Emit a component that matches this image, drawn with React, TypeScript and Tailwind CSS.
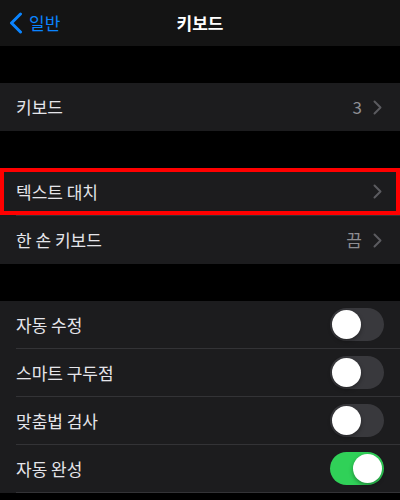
const font = { fontFamily: '"Noto Sans CJK KR", "Noto Sans", sans-serif' };

function Chevron() {
  return (
    <svg width="9" height="15" viewBox="0 0 9 15" fill="none" className="ml-[11px]">
      <path d="M1.5 1.5L7.5 7.5L1.5 13.5" stroke="#5b5b5f" strokeWidth="2" strokeLinecap="round" strokeLinejoin="round" />
    </svg>
  );
}

function Toggle({ on }: { on: boolean }) {
  return (
    <div
      className={`w-[54px] h-[33px] rounded-full p-[2px] flex ${on ? "bg-[#30d158] justify-end" : "bg-[#39393d] justify-start"}`}
    >
      <div className="w-[29px] h-[29px] rounded-full bg-white shadow-[0_2px_4px_rgba(0,0,0,0.35)]" />
    </div>
  );
}

function NavRow({ label, value, boxed }: { label: string; value?: string; boxed?: boolean }) {
  return (
    <div
      className={`flex items-center bg-[#1c1c1e] ${boxed ? "h-[47px] border-4 border-[#ff0000] pl-[12px] pr-[14px]" : "h-[48px] pl-4 pr-[18px]"}`}
    >
      <span className="flex-1 text-[17px] text-[#e5e5ea]">{label}</span>
      {value && <span className="text-[17px] text-[#8e8e93]">{value}</span>}
      <Chevron />
    </div>
  );
}

function ToggleRow({ label, on, last }: { label: string; on: boolean; last?: boolean }) {
  return (
    <div className="bg-[#1c1c1e] pl-4">
      <div className={`h-[48px] flex items-center pr-4 ${last ? "" : "border-b border-[#333336]"}`}>
        <span className="flex-1 text-[17px] text-[#e5e5ea]">{label}</span>
        <Toggle on={on} />
      </div>
    </div>
  );
}

export default function App() {
  return (
    <div className="w-[400px] h-[500px] bg-black overflow-hidden" style={font}>
      {/* nav bar */}
      <div className="h-[46px] bg-[#141414] flex items-center relative">
        <div className="flex items-center pl-[9px] gap-[6px]">
          <svg width="14" height="22" viewBox="0 0 14 22" fill="none">
            <path d="M11.5 2L2.5 11L11.5 20" stroke="#0a84ff" strokeWidth="3" strokeLinecap="round" strokeLinejoin="round" />
          </svg>
          <span className="text-[17px] text-[#0a84ff]">일반</span>
        </div>
        <span className="absolute left-0 right-0 text-center text-[17px] font-semibold text-white pointer-events-none">
          키보드
        </span>
      </div>

      <div className="h-[37px]" />
      <NavRow label="키보드" value="3" />

      <div className="h-[37px]" />
      <NavRow label="텍스트 대치" boxed />
      <div className="bg-[#1c1c1e] pl-4">
        <div className="h-px bg-[#333336]" />
      </div>
      <NavRow label="한 손 키보드" value="끔" />

      <div className="h-[37px]" />
      <ToggleRow label="자동 수정" on={false} />
      <ToggleRow label="스마트 구두점" on={false} />
      <ToggleRow label="맞춤법 검사" on={false} />
      <ToggleRow label="자동 완성" on={true} />
    </div>
  );
}
